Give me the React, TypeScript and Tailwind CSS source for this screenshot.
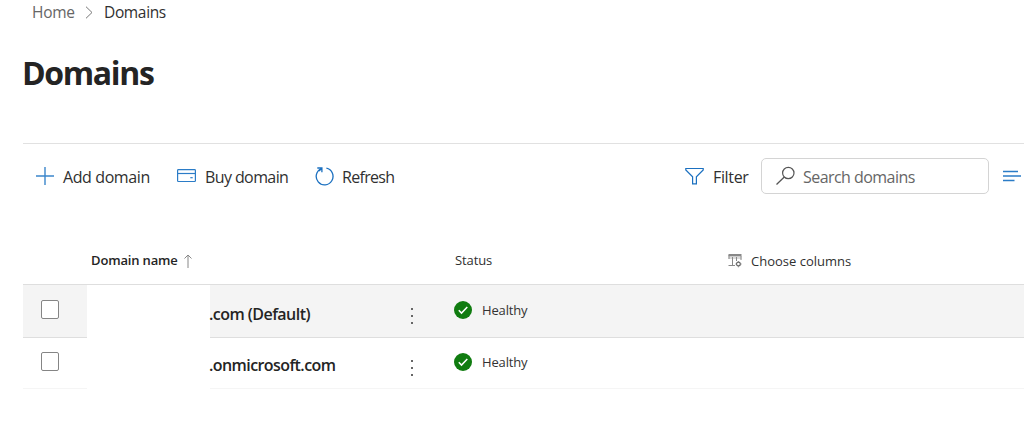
import { type ReactNode } from "react";

interface CommandProps {
	icon: ReactNode;
	label: string;
	className: string;
	labelClassName?: string;
}

interface Domain {
	suffix: string;
	status: string;
	highlighted: boolean;
}

const domains: Domain[] = [
	{ suffix: ".com (Default)", status: "Healthy", highlighted: true },
	{ suffix: ".onmicrosoft.com", status: "Healthy", highlighted: false },
];

function Command({
	icon,
	label,
	className,
	labelClassName = "",
}: Readonly<CommandProps>) {
	return (
		<button
			type="button"
			className={`flex shrink-0 items-center whitespace-nowrap text-left ${className}`}
		>
			{icon}
			<span className={`pt-0.5 ${labelClassName}`}>{label}</span>
		</button>
	);
}

function PlusIcon() {
	return (
		<svg width="18" height="18" viewBox="0 0 18 18" fill="none" stroke="#3b86cb" className="mr-[9px] shrink-0">
			<path d="M9 0v18M0 9h18" strokeWidth="1.4" />
		</svg>
	);
}

function CardIcon() {
	return (
		<svg width="19" height="14" viewBox="0 0 19 14" fill="none" stroke="#2b7cc7" className="mr-[9px] shrink-0">
			<rect x="0.6" y="0.6" width="17.8" height="11.9" rx="0.8" strokeWidth="1.2" />
			<path d="M1 4.5h17" strokeWidth="1.2" />
			<path d="M13.3 8.7h2.4" strokeWidth="1.2" />
		</svg>
	);
}

function RefreshIcon() {
	return (
		<svg width="19" height="19" viewBox="0 0 19 19" fill="none" stroke="#1b70c0" className="mr-[8px] shrink-0">
			<path d="M11.4 1.2a8.4 8.4 0 1 1-4.9.4" strokeWidth="1.3" />
			<path d="M2.3 1h4.6v4.2M6.9 1.2L4 4" strokeWidth="1.3" />
		</svg>
	);
}

function FilterIcon() {
	return (
		<svg width="19" height="18" viewBox="0 0 19 18" fill="none" stroke="#1b70c0" className="mr-[9px] shrink-0">
			<path d="M0.8 1.5h17.4v1.4L11.4 9.8v7H7.6v-7L0.8 2.9z" strokeWidth="1.2" />
		</svg>
	);
}

function SearchIcon() {
	return (
		<svg width="20" height="20" viewBox="0 0 20 20" fill="none" stroke="#555" className="mr-[7px] shrink-0">
			<circle cx="12.3" cy="7" r="5.7" strokeWidth="1.2" />
			<path d="M8.3 11L0.5 18.5" strokeWidth="1.3" />
		</svg>
	);
}

function ListIcon() {
	return (
		<svg width="18" height="12" viewBox="0 0 18 12" fill="none" stroke="#2b7cc7" className="shrink-0">
			<path d="M0 1.5h15M0 6h18M0 10.5h11.5" strokeWidth="1.4" />
		</svg>
	);
}

function ColumnsIcon() {
	return (
		<svg width="14" height="14" viewBox="0 0 14 14" fill="none" stroke="#888" className="mr-[9px] shrink-0">
			<path d="M0.5 1.2h13" strokeWidth="2.4" />
			<path d="M0.5 4h13" strokeWidth="0.6" />
			<path d="M1 1v4M4.5 3v8M8.5 3v4M13 2v4M0.5 11.5h6.5" />
			<circle cx="10.4" cy="10" r="1.9" strokeWidth="1.2" stroke="#666" />
			<path d="M10.4 7v1M10.4 12v1.3M7.5 10h1M12.4 10h1.2" />
		</svg>
	);
}

function HealthyIcon() {
	return (
		<svg width="18" height="18" viewBox="0 0 18 18" className="mr-[10px] shrink-0">
			<circle cx="9" cy="9" r="9" fill="#107c10" />
			<path d="M4.8 9.3l2.7 2.8 5.8-6" fill="none" stroke="#fff" strokeWidth="1.5" />
		</svg>
	);
}

function MoreIcon() {
	return (
		<svg width="4" height="18" viewBox="0 0 4 18" fill="#666">
			<rect x="1" y="1" width="2" height="2" />
			<rect x="1" y="8" width="2" height="2" />
			<rect x="1" y="15" width="2" height="2" />
		</svg>
	);
}

function DomainRow({ suffix, status, highlighted }: Readonly<Domain>) {
	return (
		<div
			className={`flex border-b ${
				highlighted
					? "h-[53px] border-[#dedede] bg-[#f4f4f4]"
					: "h-[51px] border-[#f5f5f5]"
			}`}
		>
			<div className={`w-16 shrink-0 pl-[18px] ${highlighted ? "pt-[15px]" : "pt-[14px]"}`}>
				<div className="h-[19px] w-[18px] rounded-[2px] border border-[#858585] bg-white" />
			</div>
			{/* the tenant name is hidden, only the suffix is readable */}
			<div className="-mb-px w-[123px] shrink-0 bg-white" />
			<div
				className={`-ml-px w-[201px] shrink-0 text-base leading-6 font-semibold whitespace-nowrap text-[#242424] ${
					highlighted ? "pt-[17px] tracking-[-0.55px]" : "pt-[15px] tracking-[-0.58px]"
				}`}
			>
				{suffix}
			</div>
			<div className={`w-[45px] shrink-0 ${highlighted ? "pt-[22px]" : "pt-[21px]"}`}>
				<MoreIcon />
			</div>
			<div
				className={`-ml-px flex items-center text-[13px] tracking-[-0.15px] text-[#333] ${
					highlighted ? "h-[50px]" : "h-[48px]"
				}`}
			>
				<HealthyIcon />
				<span className="pt-px">{status}</span>
			</div>
		</div>
	);
}

export default function App() {
	return (
		<main className="h-[436px] w-full overflow-hidden bg-white pl-[23px] font-['Open_Sans','Noto_Sans',sans-serif] text-[#303030]">
			<nav className="flex h-6 items-center pl-[9px] text-[15.5px] leading-6">
				<span className="w-[53px] tracking-[-0.3px] text-[#666]">Home</span>
				<svg width="8" height="13" viewBox="0 0 8 13" fill="none" stroke="#777" className="mr-[11px]">
					<path d="M1 0.7l6 5.8-6 5.8" />
				</svg>
				<span className="tracking-[-0.35px]">Domains</span>
			</nav>
			<h1 className="mt-6 -ml-px h-[50px] text-[32px] leading-[50px] font-bold tracking-[-1.35px] text-[#242424]">
				Domains
			</h1>
			<div className="mt-[45px] flex h-[66px] items-center border-t border-[#e1e1e1] pb-px pl-[13px] text-base">
				<Command icon={<PlusIcon />} label="Add domain" className="w-[141px]" labelClassName="tracking-[-0.4px]" />
				<Command icon={<CardIcon />} label="Buy domain" className="w-[139px]" labelClassName="tracking-[-0.6px]" />
				<Command icon={<RefreshIcon />} label="Refresh" className="-ml-px w-[370px]" labelClassName="tracking-[-0.7px]" />
				<Command icon={<FilterIcon />} label="Filter" className="w-[76px]" labelClassName="tracking-[-0.35px]" />
				<div className="flex h-9 w-[228px] shrink-0 items-center rounded-[5px] border border-[#d4d4d4] pl-[14px] text-[#666]">
					<SearchIcon />
					<span className="pt-0.5 tracking-[-0.55px]">Search domains</span>
				</div>
				<button type="button" className="ml-[14px]">
					<ListIcon />
				</button>
			</div>
			<section className="mt-[26px]">
				<div className="flex h-[50px] items-center border-b border-[#dedede] pt-0.5 pl-[68px] text-[13px]">
					<div className="flex w-[364px] shrink-0 items-center font-semibold text-[#242424]">
						<span className="w-[93px] tracking-[-0.15px]">Domain name</span>
						<svg width="8" height="14" viewBox="0 0 8 14" fill="none" stroke="#888">
							<path d="M4 14V1M0.5 4.5L4 1l3.5 3.5" />
						</svg>
					</div>
					<span className="w-[273px] shrink-0 tracking-[-0.1px]">Status</span>
					<button type="button" className="flex items-center whitespace-nowrap">
						<ColumnsIcon />
						<span className="pt-0.5">Choose columns</span>
					</button>
				</div>
				{domains.map((domain) => (
					<DomainRow key={domain.suffix} {...domain} />
				))}
			</section>
		</main>
	);
}
